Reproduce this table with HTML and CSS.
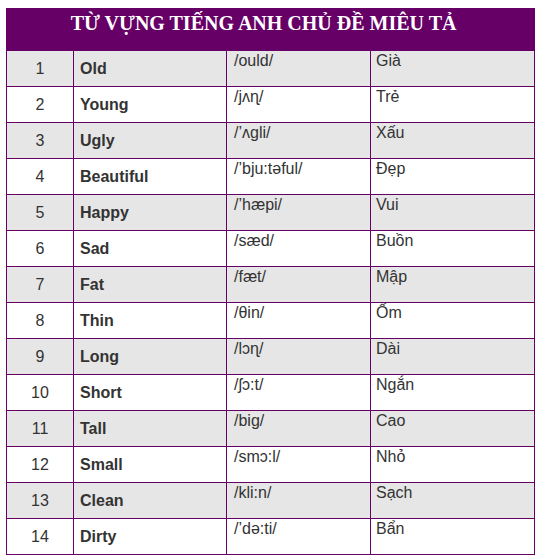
FILE: index.html
```html
<!DOCTYPE html>
<html>
<head>
<meta charset="utf-8">
<link rel="stylesheet" href="styles.css">
</head>
<body>
<table class="vocab">
  <colgroup>
    <col class="c1"><col class="c2"><col class="c3"><col class="c4">
  </colgroup>
  <thead>
    <tr><th colspan="4" class="title">TỪ VỰNG TIẾNG ANH CHỦ ĐỀ MIÊU TẢ</th></tr>
  </thead>
  <tbody>
    <tr class="alt"><td class="num">1</td><td class="word">Old</td><td class="ipa">/ould/</td><td class="mean">Già</td></tr>
    <tr><td class="num">2</td><td class="word">Young</td><td class="ipa">/jʌɳ/</td><td class="mean">Trẻ</td></tr>
    <tr class="alt"><td class="num">3</td><td class="word">Ugly</td><td class="ipa">/’ʌgli/</td><td class="mean">Xấu</td></tr>
    <tr><td class="num">4</td><td class="word">Beautiful</td><td class="ipa">/’bju:təful/</td><td class="mean">Đẹp</td></tr>
    <tr class="alt"><td class="num">5</td><td class="word">Happy</td><td class="ipa">/’hæpi/</td><td class="mean">Vui</td></tr>
    <tr><td class="num">6</td><td class="word">Sad</td><td class="ipa">/sæd/</td><td class="mean">Buồn</td></tr>
    <tr class="alt"><td class="num">7</td><td class="word">Fat</td><td class="ipa">/fæt/</td><td class="mean">Mập</td></tr>
    <tr><td class="num">8</td><td class="word">Thin</td><td class="ipa">/θin/</td><td class="mean">Ốm</td></tr>
    <tr class="alt"><td class="num">9</td><td class="word">Long</td><td class="ipa">/lɔɳ/</td><td class="mean">Dài</td></tr>
    <tr><td class="num">10</td><td class="word">Short</td><td class="ipa">/ʃɔ:t/</td><td class="mean">Ngắn</td></tr>
    <tr class="alt"><td class="num">11</td><td class="word">Tall</td><td class="ipa">/big/</td><td class="mean">Cao</td></tr>
    <tr><td class="num">12</td><td class="word">Small</td><td class="ipa">/smɔ:l/</td><td class="mean">Nhỏ</td></tr>
    <tr class="alt"><td class="num">13</td><td class="word">Clean</td><td class="ipa">/kli:n/</td><td class="mean">Sạch</td></tr>
    <tr><td class="num">14</td><td class="word">Dirty</td><td class="ipa">/’də:ti/</td><td class="mean">Bẩn</td></tr>
  </tbody>
</table>
</body>
</html>
```
FILE: styles.css
```css
html, body {
  margin: 0;
  padding: 0;
  background: #ffffff;
}
body {
  padding: 8px 0 0 6px;
  font-family: "Liberation Sans", Arial, sans-serif;
}
.vocab {
  border-collapse: collapse;
  table-layout: fixed;
  width: 528px;
  color: #333333;
  font-size: 16px;
}
.c1 { width: 67px; }
.c2 { width: 153px; }
.c3 { width: 144px; }
.c4 { width: 164px; }
.title {
  background: #660066;
  color: #ffffff;
  font-family: "Liberation Serif", "Times New Roman", serif;
  font-weight: bold;
  font-size: 20px;
  height: 42px;
  padding: 0 14px 12px 0;
  text-align: center;
  vertical-align: middle;
  border: 1px solid #660066;
  box-sizing: border-box;
}
.vocab td {
  border: 1px solid #660066;
  height: 35px;
  padding: 0;
  box-sizing: border-box;
}
.vocab tbody tr { height: 36px; }
.alt td { background: #e6e6e6; }
.num {
  text-align: center;
  vertical-align: middle;
}
.word {
  font-weight: bold;
  vertical-align: middle;
  padding-left: 6px !important;
}
.ipa, .mean {
  vertical-align: top;
  padding: 1px 0 0 7px !important;
}
.mean { padding-left: 5px !important; }
```
